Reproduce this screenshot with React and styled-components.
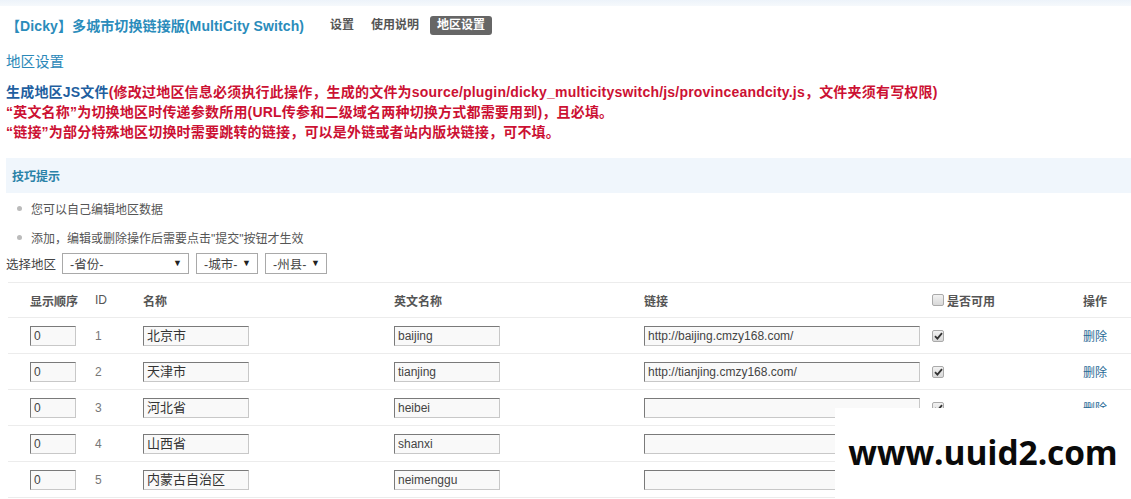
import React from "react";
import styled, { createGlobalStyle } from "styled-components";

const Global = createGlobalStyle`
  html, body { margin: 0; padding: 0; background: #fff; }
  body {
    font-family: "Liberation Sans", Arial, "Noto Sans CJK SC", sans-serif;
    font-size: 12px;
    color: #444;
  }
`;

const Page = styled.div`
  position: relative;
  width: 1131px;
  height: 499px;
  overflow: hidden;
  background: #fff;
`;

const TopBand = styled.div`
  height: 6px;
  background: linear-gradient(#edf3fa, #f6f9fc);
`;

const Header = styled.div`
  display: flex;
  align-items: center;
  height: 38px;
  padding: 0 6px;
`;

const Title = styled.h1`
  margin: 0;
  font-size: 14px;
  font-weight: bold;
  color: #2a8cbb;
  width: 318px;
  white-space: nowrap;
  letter-spacing: 0.1px;
`;

const Nav = styled.nav`
  display: flex;
  align-items: center;
  gap: 5px;
`;

const NavItem = styled.a`
  display: inline-block;
  padding: 2px ${(p) => (p.$active ? 7 : 6)}px;
  height: 15px;
  line-height: 15px;
  font-size: 12px;
  font-weight: bold;
  border-radius: 3px;
  color: ${(p) => (p.$active ? "#fff" : "#555")};
  background: ${(p) => (p.$active ? "#666" : "transparent")};
`;

const Heading = styled.h2`
  margin: 8px 0 0;
  padding: 0 6px;
  font-size: 14.5px;
  font-weight: normal;
  color: #2b88b8;
  line-height: 20px;
`;

const Notes = styled.div`
  margin-top: 10px;
  padding: 0 6px;
  font-size: 14px;
  font-weight: bold;
  line-height: 20px;
  letter-spacing: 0.2px;
  color: #cc1133;
  white-space: nowrap;
`;

const JsLink = styled.a`
  color: #1f5fa0;
`;

const Tips = styled.div`
  margin: 16px 0 0 6px;
  height: 35px;
  display: flex;
  align-items: center;
  padding-left: 6px;
  background: #f0f6fc;
  font-size: 12px;
  font-weight: bold;
  color: #2a82a8;
`;

const TipList = styled.ul`
  list-style: none;
  margin: 0;
  padding: 1px 0 0 17px;
`;

const Tip = styled.li`
  display: flex;
  align-items: center;
  height: 29px;
  font-size: 12px;
  color: #555;
  &::before {
    content: "";
    width: 5px;
    height: 5px;
    border-radius: 50%;
    background: #bbb;
    margin-right: 9px;
  }
`;

const FilterRow = styled.div`
  display: flex;
  align-items: center;
  gap: 7px;
  padding: 0 6px;
  height: 22px;
  font-size: 12.5px;
  color: #444;
`;

const FilterLabel = styled.span`
  white-space: nowrap;
  width: 49px;
`;

const FakeSelect = styled.div`
  box-sizing: border-box;
  width: ${(p) => p.$w}px;
  height: 21px;
  border: 1px solid #a9a9a9;
  display: flex;
  align-items: center;
  justify-content: space-between;
  padding: 0 6px 0 7px;
  font-size: 12.5px;
  color: #444;
  background: #fff;
`;

const Arrow = styled.span`
  font-size: 9px;
  color: #222;
`;

const Table = styled.div`
  margin: 8px 0 0 8px;
  border-top: 1px solid #ececec;
`;

const Row = styled.div`
  display: grid;
  grid-template-columns: 65px 48px 251px 250px 288px 151px 1fr;
  align-items: center;
  height: ${(p) => (p.$head ? 34 : 35)}px;
  padding-left: 22px;
  border-bottom: 1px solid #ececec;
`;

const HeadCell = styled.div`
  font-size: 12px;
  font-weight: ${(p) => (p.$light ? "normal" : "bold")};
  color: #555;
  display: flex;
  align-items: center;
  gap: 3px;
`;

const Cell = styled.div`
  font-size: 12px;
  color: #777;
  display: flex;
  align-items: center;
`;

const Field = styled.div`
  box-sizing: border-box;
  width: ${(p) => p.$w}px;
  height: 20px;
  line-height: 18px;
  padding: 0 3px;
  font-size: 12px;
  color: #444;
  background: #f9f9f9;
  border: 1px solid #c8c8c8;
  border-top-color: #7a7a7a;
  border-left-color: #7a7a7a;
  white-space: nowrap;
  overflow: hidden;
`;

const CnField = styled(Field)`
  font-size: 13px;
  color: #333;
`;

const Box = styled.span`
  box-sizing: border-box;
  width: 12px;
  height: 12px;
  border: 1px solid #aaa;
  border-radius: 2px;
  background: linear-gradient(#f2f2f2, #d8d8d8);
  display: inline-flex;
  align-items: center;
  justify-content: center;
`;

const DelLink = styled.a`
  font-size: 12px;
  color: #2a6a96;
`;

const Watermark = styled.div`
  position: absolute;
  right: 0;
  bottom: 0;
  width: 296px;
  height: 91px;
  background: #fff;
  display: flex;
  align-items: center;
  justify-content: center;
  padding-bottom: 4px;
  box-sizing: border-box;
  font-family: "Open Sans", "DejaVu Sans", sans-serif;
  font-weight: bold;
  font-size: 33.5px;
  color: #0a0a0a;
  letter-spacing: -0.1px;
`;

const Check = () => (
  <Box>
    <svg width="9" height="8" viewBox="0 0 9 8">
      <path d="M1 4.2 L3.4 6.6 L8 1.2" fill="none" stroke="#333" strokeWidth="1.8" />
    </svg>
  </Box>
);

const rows = [
  { id: 1, name: "北京市", en: "baijing", link: "http://baijing.cmzy168.com/" },
  { id: 2, name: "天津市", en: "tianjing", link: "http://tianjing.cmzy168.com/" },
  { id: 3, name: "河北省", en: "heibei", link: "" },
  { id: 4, name: "山西省", en: "shanxi", link: "" },
  { id: 5, name: "内蒙古自治区", en: "neimenggu", link: "" },
];

export default function App() {
  return (
    <Page>
      <Global />
      <TopBand />
      <Header>
        <Title>【Dicky】多城市切换链接版(MultiCity Switch)</Title>
        <Nav>
          <NavItem>设置</NavItem>
          <NavItem>使用说明</NavItem>
          <NavItem $active>地区设置</NavItem>
        </Nav>
      </Header>
      <Heading>地区设置</Heading>
      <Notes>
        <div>
          <JsLink>生成地区JS文件</JsLink>
          (修改过地区信息必须执行此操作，生成的文件为source/plugin/dicky_multicityswitch/js/provinceandcity.js，文件夹须有写权限)
        </div>
        <div>“英文名称”为切换地区时传递参数所用(URL传参和二级域名两种切换方式都需要用到)，且必填。</div>
        <div>“链接”为部分特殊地区切换时需要跳转的链接，可以是外链或者站内版块链接，可不填。</div>
      </Notes>
      <Tips>技巧提示</Tips>
      <TipList>
        <Tip>您可以自己编辑地区数据</Tip>
        <Tip>添加，编辑或删除操作后需要点击"提交"按钮才生效</Tip>
      </TipList>
      <FilterRow>
        <FilterLabel>选择地区</FilterLabel>
        <FakeSelect $w={127}>-省份-<Arrow>▼</Arrow></FakeSelect>
        <FakeSelect $w={62}>-城市-<Arrow>▼</Arrow></FakeSelect>
        <FakeSelect $w={62}>-州县-<Arrow>▼</Arrow></FakeSelect>
      </FilterRow>
      <Table>
        <Row $head>
          <HeadCell>显示顺序</HeadCell>
          <HeadCell $light>ID</HeadCell>
          <HeadCell>名称</HeadCell>
          <HeadCell>英文名称</HeadCell>
          <HeadCell>链接</HeadCell>
          <HeadCell>
            <Box />
            是否可用
          </HeadCell>
          <HeadCell>操作</HeadCell>
        </Row>
        {rows.map((r) => (
          <Row key={r.id}>
            <Cell><Field $w={46}>0</Field></Cell>
            <Cell>{r.id}</Cell>
            <Cell><CnField $w={106}>{r.name}</CnField></Cell>
            <Cell><Field $w={106}>{r.en}</Field></Cell>
            <Cell><Field $w={276}>{r.link}</Field></Cell>
            <Cell><Check /></Cell>
            <Cell><DelLink>删除</DelLink></Cell>
          </Row>
        ))}
      </Table>
      <Watermark>www.uuid2.com</Watermark>
    </Page>
  );
}
